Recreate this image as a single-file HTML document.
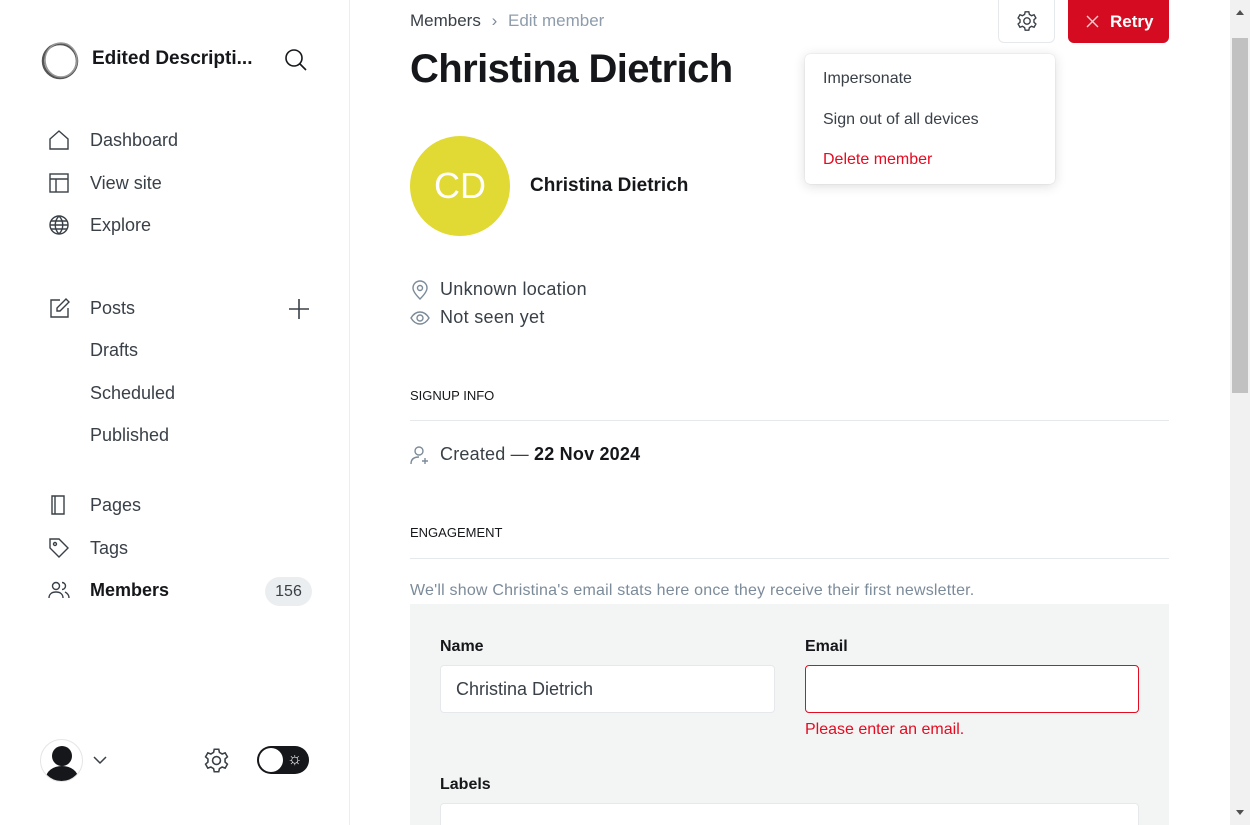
<!DOCTYPE html>
<html style="overflow:hidden;width:1250px;height:825px"><head><style>
*{box-sizing:border-box;margin:0;padding:0}
body{width:1250px;height:825px;overflow:hidden;font-family:"Liberation Sans",sans-serif;background:#fff;color:#15171a;position:relative}
.side{position:absolute;left:0;top:0;width:350px;height:825px;border-right:1px solid #ebeef0}
.nav{position:absolute;left:48px;display:flex;align-items:center;font-size:18px;color:#394047}
.nav svg{width:22px;height:22px;margin-right:20px;fill:none;stroke:#394047;stroke-width:1.4}
.sub{position:absolute;left:90px;font-size:18px;color:#394047}
.abs{position:absolute}
.scroll{position:absolute;left:1230px;top:0;width:20px;height:825px;background:#f1f1f1}
.lbl{font-size:16px;font-weight:bold;color:#15171a}
</style></head><body>
<div class="side">
 <svg class="abs" style="left:40px;top:41px" width="40" height="40" viewBox="0 0 40 40" fill="none" stroke="#555" stroke-width="2.5"><circle cx="20" cy="20" r="17"/><ellipse cx="21" cy="19" rx="16" ry="17" stroke="#999" stroke-width="1.5"/></svg>
 <div class="abs" style="left:92px;top:48px;font-size:19px;font-weight:bold">Edited Descripti...</div>
 <svg class="abs" style="left:284px;top:48px" width="24" height="24" viewBox="0 0 24 24" fill="none" stroke="#15171a" stroke-width="1.6"><circle cx="10" cy="10" r="8"/><path d="M16 16l6 6"/></svg>
 <div class="nav" style="top:129px"><svg viewBox="0 0 22 22"><path d="M2 10L11 2l9 8v10H2z"/></svg>Dashboard</div>
 <div class="nav" style="top:172px"><svg viewBox="0 0 22 22"><rect x="2" y="2" width="18" height="18"/><path d="M2 7h18M8 7v13"/></svg>View site</div>
 <div class="nav" style="top:214px"><svg viewBox="0 0 22 22"><circle cx="11" cy="11" r="9"/><path d="M2 11h18M11 2c-5 5-5 13 0 18M11 2c5 5 5 13 0 18M3 7h16M3 15h16"/></svg>Explore</div>
 <div class="nav" style="top:297px"><svg viewBox="0 0 22 22"><path d="M12 3H3v17h17v-9M18 2l3 3-9 9H9v-3z"/></svg>Posts</div>
 <svg class="abs" style="left:288px;top:298px" width="22" height="22" viewBox="0 0 22 22" stroke="#394047" stroke-width="1.6"><path d="M11 1v20M1 11h20"/></svg>
 <div class="sub" style="top:340px">Drafts</div>
 <div class="sub" style="top:383px">Scheduled</div>
 <div class="sub" style="top:425px">Published</div>
 <div class="nav" style="top:494px"><svg viewBox="0 0 22 22"><path d="M4 2h12v18H4zM7 2v18"/></svg>Pages</div>
 <div class="nav" style="top:537px"><svg viewBox="0 0 22 22"><path d="M2 2h9l9 9-9 9-9-9z"/><circle cx="7" cy="7" r="1.5"/></svg>Tags</div>
 <div class="nav" style="top:579px;color:#15171a;font-weight:bold"><svg viewBox="0 0 22 22"><circle cx="8" cy="7" r="3.5"/><path d="M1 19c0-4 3-6 7-6s7 2 7 6M14 3.5a3.5 3.5 0 010 7M17 13c2 1 4 3 4 6"/></svg>Members</div>
 <div class="abs" style="left:265px;top:577px;width:47px;height:29px;border-radius:15px;background:#ebeef0;font-size:16px;color:#394047;text-align:center;line-height:29px">156</div>
 <div class="abs" style="left:40px;top:739px;width:43px;height:43px;border-radius:50%;border:1px solid #e5e5e5;overflow:hidden;background:#fff"><div class="abs" style="left:11px;top:6px;width:20px;height:20px;border-radius:50%;background:#15171a"></div><div class="abs" style="left:5px;top:26px;width:32px;height:24px;border-radius:50%;background:#15171a"></div></div>
 <svg class="abs" style="left:92px;top:754px" width="16" height="12" viewBox="0 0 16 12" fill="none" stroke="#394047" stroke-width="1.5"><path d="M2 3l6 6 6-6"/></svg>
 <svg class="abs" style="left:203px;top:747px" width="27" height="27" viewBox="0 0 24 24" fill="none" stroke="#394047" stroke-width="1.4"><circle cx="12" cy="12" r="3.5"/><path d="M10 2h4l.6 2.8 2.4 1.4 2.7-1 2 3.5-2.1 1.9v2.8l2.1 1.9-2 3.5-2.7-1-2.4 1.4L14 22h-4l-.6-2.8-2.4-1.4-2.7 1-2-3.5 2.1-1.9v-2.8L2.3 8.7l2-3.5 2.7 1 2.4-1.4z"/></svg>
 <div class="abs" style="left:257px;top:746px;width:52px;height:28px;border-radius:14px;background:#15171a"><div class="abs" style="left:2px;top:2px;width:24px;height:24px;border-radius:50%;background:#fff"></div><div class="abs" style="left:30px;top:3px;color:#fff;font-size:17px">☼</div></div>
</div>
<div class="abs" style="left:410px;top:11px;font-size:17px;color:#394047">Members <span style="color:#7c8b9a;margin:0 6px">›</span> <span style="color:#8e9cac">Edit member</span></div>
<div class="abs" style="left:410px;top:47px;font-size:40px;font-weight:bold;letter-spacing:-0.6px">Christina Dietrich</div>
<div class="abs" style="left:998px;top:0;width:57px;height:43px;border:1px solid #e6e9eb;border-top:none;border-radius:0 0 6px 6px"></div>
<svg class="abs" style="left:1016px;top:10px" width="22" height="22" viewBox="0 0 24 24" fill="none" stroke="#394047" stroke-width="1.5"><circle cx="12" cy="12" r="3.5"/><path d="M10 2h4l.6 2.8 2.4 1.4 2.7-1 2 3.5-2.1 1.9v2.8l2.1 1.9-2 3.5-2.7-1-2.4 1.4L14 22h-4l-.6-2.8-2.4-1.4-2.7 1-2-3.5 2.1-1.9v-2.8L2.3 8.7l2-3.5 2.7 1 2.4-1.4z"/></svg>
<div class="abs" style="left:1068px;top:0;width:101px;height:43px;background:#d50b21;border-radius:0 0 6px 6px;color:#fff;font-weight:bold;font-size:17px;line-height:43px;padding-left:42px">Retry</div>
<svg class="abs" style="left:1086px;top:15px" width="13" height="13" stroke="#fff" stroke-width="1.4" opacity=".8"><path d="M1 1l11 11M12 1L1 12"/></svg>
<div class="abs" style="left:410px;top:136px;width:100px;height:100px;border-radius:50%;background:#e1d934;color:#fff;font-size:36px;text-align:center;line-height:100px">CD</div>
<div class="abs" style="left:530px;top:175px;font-size:19px;font-weight:bold">Christina Dietrich</div>
<div class="abs" style="left:805px;top:54px;width:250px;height:130px;background:#fff;border-radius:5px;box-shadow:0 2px 12px rgba(0,0,0,.14),0 0 1px rgba(0,0,0,.2)">
 <div class="abs" style="left:18px;top:16px;font-size:16px;color:#394047">Impersonate</div>
 <div class="abs" style="left:18px;top:57px;font-size:16px;color:#394047">Sign out of all devices</div>
 <div class="abs" style="left:18px;top:97px;font-size:16px;color:#e50b21">Delete member</div>
</div>
<svg class="abs" style="left:411px;top:280px" width="18" height="20" viewBox="0 0 18 20" fill="none" stroke="#7c8b9a" stroke-width="1.4"><path d="M9 19C4 14 2 11 2 8a7 7 0 0114 0c0 3-2 6-7 11z"/><circle cx="9" cy="8" r="2.5"/></svg>
<div class="abs" style="left:440px;top:279px;font-size:18px;color:#394047;letter-spacing:.3px">Unknown location</div>
<svg class="abs" style="left:410px;top:310px" width="20" height="16" viewBox="0 0 20 16" fill="none" stroke="#7c8b9a" stroke-width="1.4"><path d="M1 8c3-5 6-6 9-6s6 1 9 6c-3 5-6 6-9 6s-6-1-9-6z"/><circle cx="10" cy="8" r="3"/></svg>
<div class="abs" style="left:440px;top:307px;font-size:18px;color:#394047;letter-spacing:.3px">Not seen yet</div>
<div class="abs" style="left:410px;top:388px;font-size:13px;color:#15171a">SIGNUP INFO</div>
<div class="abs" style="left:410px;top:420px;width:759px;height:1px;background:#e6e9eb"></div>
<svg class="abs" style="left:410px;top:445px" width="20" height="20" viewBox="0 0 20 20" fill="none" stroke="#7c8b9a" stroke-width="1.4"><circle cx="9" cy="6" r="4"/><path d="M1 19c0-5 3-7 8-7M15 13v6M12 16h6"/></svg>
<div class="abs" style="left:440px;top:444px;font-size:18px;color:#394047;letter-spacing:.2px">Created — <b style="color:#15171a">22 Nov 2024</b></div>
<div class="abs" style="left:410px;top:525px;font-size:13px">ENGAGEMENT</div>
<div class="abs" style="left:410px;top:558px;width:759px;height:1px;background:#e6e9eb"></div>
<div class="abs" style="left:410px;top:582px;font-size:16px;color:#7c8b9a;letter-spacing:.2px">We'll show Christina's email stats here once they receive their first newsletter.</div>
<div class="abs" style="left:410px;top:604px;width:759px;height:221px;background:#f3f5f4;overflow:hidden">
 <div class="abs lbl" style="left:30px;top:34px">Name</div>
 <div class="abs" style="left:30px;top:61px;width:335px;height:48px;background:#fff;border:1px solid #e6e9eb;border-radius:4px;font-size:18px;color:#394047;padding:13px 15px">Christina Dietrich</div>
 <div class="abs lbl" style="left:395px;top:34px">Email</div>
 <div class="abs" style="left:395px;top:61px;width:334px;height:48px;background:#fff;border:1px solid #e50b21;border-radius:4px"></div>
 <div class="abs" style="left:395px;top:117px;font-size:16px;color:#e50b21">Please enter an email.</div>
 <div class="abs lbl" style="left:30px;top:172px">Labels</div>
 <div class="abs" style="left:30px;top:199px;width:699px;height:40px;background:#fff;border:1px solid #e6e9eb;border-radius:4px"></div>
</div>
<div class="scroll"><div class="abs" style="left:2px;top:38px;width:16px;height:355px;background:#c1c1c1"></div>
<div class="abs" style="left:6px;top:10px;border:4px solid transparent;border-bottom:5px solid #505050;border-top:none"></div>
<div class="abs" style="left:6px;top:810px;border:4px solid transparent;border-top:5px solid #505050;border-bottom:none"></div></div>
</body></html>
